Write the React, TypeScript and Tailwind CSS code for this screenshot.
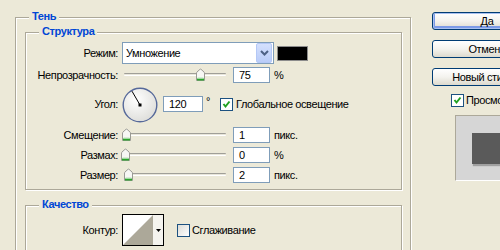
import React from "react";

type GroupProps = {
  title: string;
  className?: string;
  children?: React.ReactNode;
};

const Group: React.FC<GroupProps> = ({ title, className, children }) => {
  return (
    <div
      className={`relative shrink-0 border border-[#ACA899] shadow-[1px_1px_0_#fff,inset_1px_1px_0_#fff] ${className ?? ""}`}
    >
      <span className="absolute -top-[8px] left-[13px] bg-[#ECE9D8] px-[3px] font-bold leading-[13px] text-[#0046D5]">
        {title}
      </span>
      {children}
    </div>
  );
};

const Label: React.FC<{ children: React.ReactNode }> = ({ children }) => (
  <div className="w-[92px] shrink-0 text-right">{children}</div>
);

const TextBox: React.FC<{ value: string; className?: string }> = ({ value, className }) => (
  <div
    className={`flex h-[16px] shrink-0 items-center border border-[#7F9DB9] bg-white pl-[5px] leading-[14px] ${className ?? ""}`}
  >
    {value}
  </div>
);

const Thumb: React.FC = () => (
  <svg width="11" height="13" viewBox="0 0 11 13">
    <path d="M1.5 12.5 V5 Q1.5 4.5 2 4 L5 1.3 Q5.5 0.9 6 1.3 L9 4 Q9.5 4.5 9.5 5 V12.5 Z" fill="#F7F7F4" stroke="#9A9A94" />
    <path d="M2 11.5 H9" stroke="#2BA52B" strokeWidth="2" />
    <path d="M2.5 10 H8.5" stroke="#B8E0B8" strokeWidth="1" />
  </svg>
);

const Slider: React.FC<{ thumbClass: string }> = ({ thumbClass }) => (
  <div className="relative h-[16px] w-[106px] shrink-0">
    <div className="absolute left-[2px] right-[2px] top-[6px] h-[3px] rounded-[1px] border-t border-b border-t-[#A09F98] border-b-white bg-[#E8E6DA]" />
    <div className={`absolute top-[1px] ${thumbClass}`}>
      <Thumb />
    </div>
  </div>
);

const CheckBox: React.FC<{ checked?: boolean }> = ({ checked }) => (
  <div
    className={`flex h-[13px] w-[13px] shrink-0 items-center justify-center border border-[#1C5180] ${
      checked ? "bg-white" : "bg-linear-to-br from-[#DCDCD7] to-white"
    }`}
  >
    {checked && (
      <svg width="11" height="11" viewBox="0 0 11 11">
        <path d="M2.5 5 L4.5 7.5 L8.5 2.5" fill="none" stroke="#21A121" strokeWidth="2" />
      </svg>
    )}
  </div>
);

const XpButton: React.FC<{ label: string; primary?: boolean; className?: string }> = ({
  label,
  primary,
  className,
}) => (
  <button
    className={`h-[18px] w-[110px] shrink-0 rounded-[3px] border border-[#003C74] bg-linear-to-b from-white via-[#F4F3EE] to-[#DDDACE] p-0 text-center leading-[16px] text-black ${
      primary ? "shadow-[inset_0_0_0_1px_#A8C0F0,inset_0_-1px_0_2px_#7D9BE8]" : ""
    } ${className ?? ""}`}
  >
    {label}
  </button>
);

const Dial: React.FC = () => (
  <svg width="36" height="36" viewBox="0 0 36 36" className="shrink-0">
    <defs>
      <radialGradient id="dialFill" cx="40%" cy="35%" r="75%">
        <stop offset="0" stopColor="#FFFFFF" />
        <stop offset="1" stopColor="#DADAD6" />
      </radialGradient>
    </defs>
    <circle cx="18" cy="18" r="16.8" fill="url(#dialFill)" stroke="#56699A" strokeWidth="1.4" />
    <line x1="18" y1="18" x2="10" y2="4.2" stroke="#000" strokeWidth="1" />
    <rect x="16.5" y="16.5" width="3" height="3" fill="#000" />
  </svg>
);

export default function App() {
  return (
    <div className="flex h-[250px] w-[500px] overflow-hidden bg-[#ECE9D8] font-['Liberation_Sans',Arial,sans-serif] text-[11px] leading-[13px] tracking-[-0.4px] text-black">
      <Group title="Тень" className="ml-[15px] mt-[17px] h-[260px] w-[396px] pl-[9px] pr-[8px] pt-[14px]">
        <Group title="Структура" className="flex h-[158px] flex-col pt-[9px]">
          {/* Режим */}
          <div className="flex h-[22px] items-center">
            <Label>Режим:</Label>
            <div className="ml-[4px] flex h-[22px] w-[152px] shrink-0 items-center border border-[#7F9DB9] bg-white">
              <span className="flex-1 pl-[3px]">Умножение</span>
              <div className="mr-[1px] flex h-[20px] w-[16px] items-center justify-center rounded-[2px] border border-[#B4C8F6] bg-linear-to-b from-[#D4E0FD] to-[#B9CCF8]">
                <svg width="9" height="6" viewBox="0 0 9 6">
                  <path d="M1 1 L4.5 4.5 L8 1" fill="none" stroke="#4D6185" strokeWidth="2" />
                </svg>
              </div>
            </div>
            <div className="ml-[3px] h-[15px] w-[31px] shrink-0 border border-[#8C8C8C] bg-black" />
          </div>

          {/* Непрозрачность */}
          <div className="mt-[3px] flex h-[16px] items-center">
            <Label>Непрозрачность:</Label>
            <div className="ml-[4px]">
              <Slider thumbClass="left-[73px]" />
            </div>
            <TextBox value="75" className="ml-[5px] w-[37px]" />
            <span className="ml-[4px]">%</span>
          </div>

          {/* Угол */}
          <div className="mt-[4px] flex h-[35px] items-start">
            <div className="flex h-[35px] items-center">
              <Label>Угол:</Label>
            </div>
            <div className="ml-[4px]">
              <Dial />
            </div>
            <TextBox value="120" className="ml-[5px] mt-[9px] w-[40px]" />
            <span className="ml-[3px] mt-[8px] w-[14px]">°</span>
            <div className="mt-[11px]">
              <CheckBox checked />
            </div>
            <span className="ml-[3px] mt-[11px]">Глобальное освещение</span>
          </div>

          {/* Смещение */}
          <div className="mt-[5px] flex h-[16px] items-center">
            <Label>Смещение:</Label>
            <div className="ml-[4px]">
              <Slider thumbClass="left-[-1px]" />
            </div>
            <TextBox value="1" className="ml-[5px] w-[37px]" />
            <span className="ml-[4px]">пикс.</span>
          </div>

          {/* Размах */}
          <div className="mt-[4px] flex h-[16px] items-center">
            <Label>Размах:</Label>
            <div className="ml-[4px]">
              <Slider thumbClass="left-[-2px]" />
            </div>
            <TextBox value="0" className="ml-[5px] w-[37px]" />
            <span className="ml-[4px]">%</span>
          </div>

          {/* Размер */}
          <div className="mt-[4px] flex h-[16px] items-center">
            <Label>Размер:</Label>
            <div className="ml-[4px]">
              <Slider thumbClass="left-[1px]" />
            </div>
            <TextBox value="2" className="ml-[5px] w-[37px]" />
            <span className="ml-[4px]">пикс.</span>
          </div>
        </Group>

        <Group title="Качество" className="mt-[15px] h-[60px] pt-[8px]">
          <div className="flex h-[32px] items-center">
            <Label>Контур:</Label>
            <div className="ml-[4px] flex h-[32px] w-[42px] shrink-0 border border-black">
              <svg width="30" height="30" viewBox="0 0 30 30" className="shrink-0">
                <rect width="30" height="30" fill="#fff" />
                <polygon points="0,30 30,0 30,30" fill="#ACA899" />
              </svg>
              <div className="flex flex-1 items-center justify-center bg-[#F4F3EE]">
                <svg width="5" height="3" viewBox="0 0 5 3">
                  <polygon points="0,0 5,0 2.5,3" fill="#000" />
                </svg>
              </div>
            </div>
            <div className="ml-[13px]">
              <CheckBox />
            </div>
            <span className="ml-[2px]">Сглаживание</span>
          </div>
        </Group>
      </Group>

      <div className="ml-[21px] mt-[12px] flex w-[110px] shrink-0 flex-col">
        <XpButton label="Да" primary />
        <XpButton label="Отмена" className="mt-[10px]" />
        <XpButton label="Новый стиль..." className="mt-[10px]" />
        <div className="ml-[19px] mt-[8px] flex items-center">
          <CheckBox checked />
          <span className="ml-[2px]">Просмотр</span>
        </div>
        <div className="ml-[23px] mt-[8px] h-[66px] w-[66px] shrink-0 border border-t-[#ACA899] border-l-[#ACA899] border-r-white border-b-white bg-[#D6D6D6] pl-[16px] pt-[17px]">
          <div className="h-[31px] w-[32px] bg-[#5A5A5A] shadow-[1px_2px_1px_rgba(0,0,0,0.25)]" />
        </div>
      </div>
    </div>
  );
}
